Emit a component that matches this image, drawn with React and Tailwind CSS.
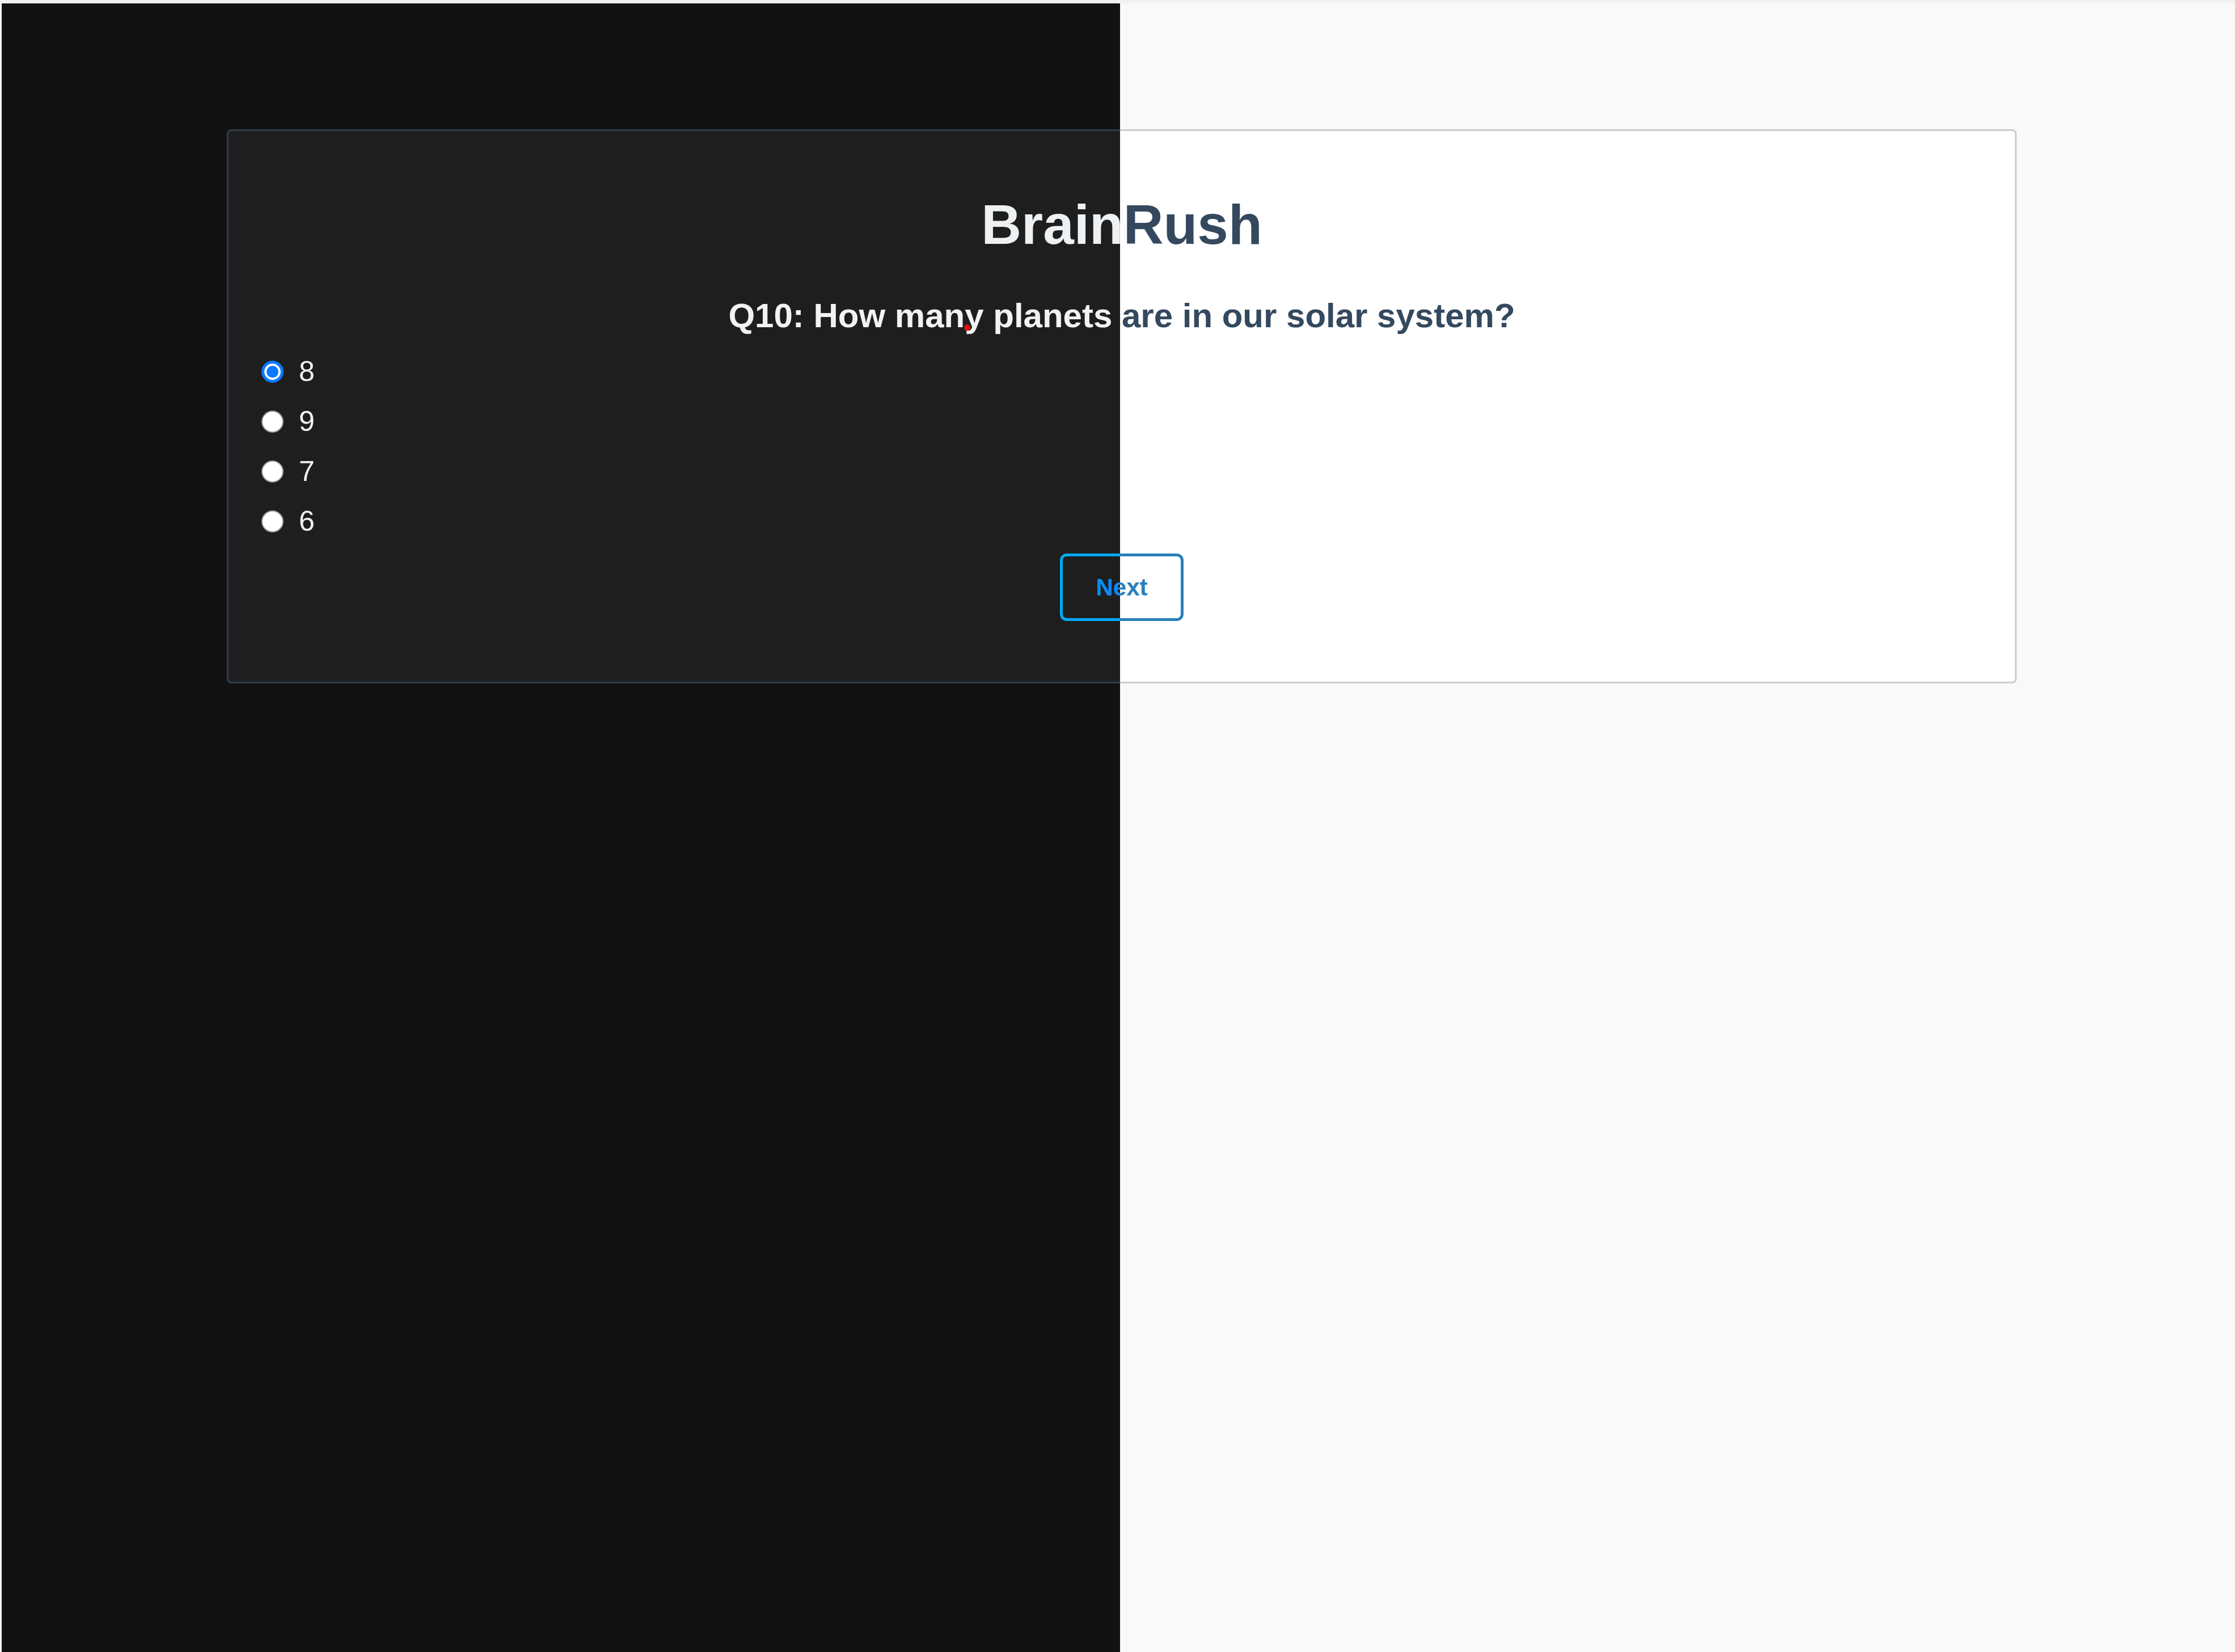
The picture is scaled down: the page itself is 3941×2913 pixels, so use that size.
import React, { useState } from 'react';

const options = ['8', '9', '7', '6'];

const Quiz = ({ dark, selected, onSelect }) => {
    const page = dark ? 'bg-[#121212]' : 'bg-[#f9f9f9]';
    const card = dark ? 'bg-[#1e1e1e] border-[#2f3e4f]' : 'bg-white border-[#cccccc]';
    const title = dark ? 'text-[#eef1f3]' : 'text-[#34495e]';
    const question = dark ? 'text-[#f2f2f2]' : 'text-[#34495e]';
    const label = dark ? 'text-[#f0f0f0]' : 'text-[#333333]';
    const button = dark ? 'border-[#03a9f4] text-[#0a8cf5]' : 'border-[#2980b9] text-[#2980b9]';

    return (
    <div className={`w-[3941px] h-[2913px] ${page}`} style={{ fontFamily: '"Liberation Sans", Arial, sans-serif' }}>
        <div className="h-[6px] bg-[#f1f1f1]" />
        <div className="pt-[222px]">
        <div className={`ml-[400px] w-[3156px] border-[3px] rounded-[8px] pt-[109px] pb-[107px] ${card}`}>
            <h1 className={`text-center text-[98px] leading-[113px] font-bold ${title}`}>BrainRush</h1>
            <h2 className={`mt-[69px] text-center text-[60px] leading-[69px] font-bold ${question}`}>
            Q10: How many planets are in our solar system?
            </h2>
            <div className="mt-[20px] pl-[58px] flex flex-col">
            {options.map((opt) => (
                <label key={opt} className="h-[88px] flex items-center gap-[27px] cursor-pointer">
                <input
                    type="radio"
                    name={dark ? 'answer-dark' : 'answer-light'}
                    checked={selected === opt}
                    onChange={() => onSelect(opt)}
                    className="appearance-none w-[39px] h-[39px] rounded-full bg-white border-[2px] border-[#9a9a9a] checked:border-[5px] checked:border-[#0a78ff] checked:bg-[#0a78ff] checked:shadow-[inset_0_0_0_4px_white]"
                />
                <span className={`text-[50px] leading-[58px] ${label}`}>{opt}</span>
                </label>
            ))}
            </div>
            <div className="mt-[13px] flex justify-center">
            <button
                type="button"
                className={`w-[218px] h-[119px] border-[5px] rounded-[12px] bg-transparent text-[42px] font-bold ${button}`}
            >
                Next
            </button>
            </div>
        </div>
        </div>
    </div>
    );
};

const App = () => {
    const [selected, setSelected] = useState('8');

    return (
    <div className="relative w-[3941px] h-[2913px] overflow-hidden">
        <Quiz dark={false} selected={selected} onSelect={setSelected} />
        {/* dark theme preview covering the left half */}
        <div className="absolute top-[6px] left-[3px] w-[1972px] bottom-0 overflow-hidden">
        <div className="-mt-[6px] -ml-[3px]">
            <Quiz dark selected={selected} onSelect={setSelected} />
        </div>
        </div>
        <span className="absolute left-[1700px] top-[572px] w-[11px] h-[11px] rounded-full bg-[#e01010]" />
    </div>
    );
};

export default App;
